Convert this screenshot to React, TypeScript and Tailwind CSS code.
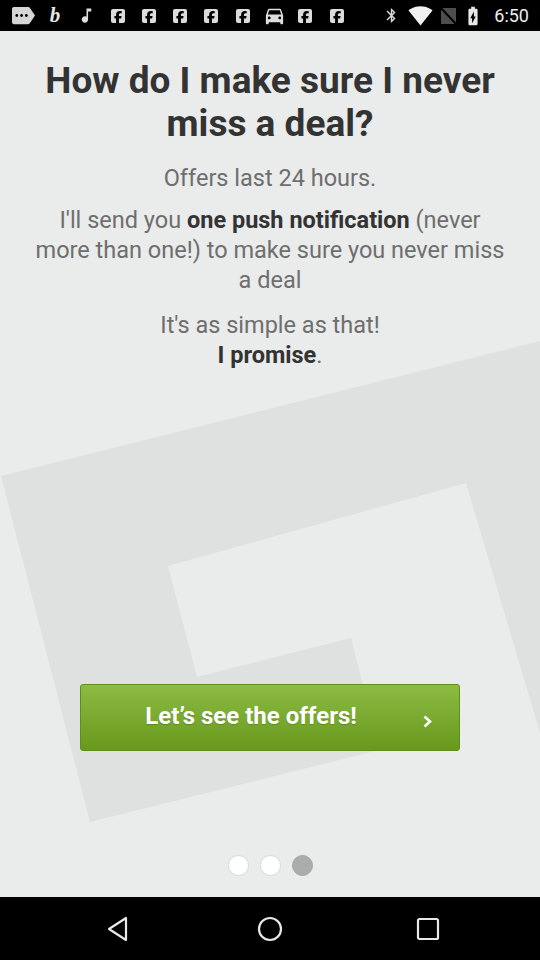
import React from "react";
import {
  MdMore,
  MdDirectionsCar,
  MdBluetooth,
  MdSignalWifi4Bar,
  MdBatteryChargingFull,
  MdMusicNote,
} from "react-icons/md";
import { FaSquareFacebook } from "react-icons/fa6";

const font = { fontFamily: "Roboto, 'Noto Sans', sans-serif" };

function Slot({ children }: { children: React.ReactNode }) {
  return <div className="w-[31.3px] flex justify-center items-center">{children}</div>;
}

function Fb() {
  return (
    <Slot>
      <FaSquareFacebook className="text-[#dcdcdc]" size={16} />
    </Slot>
  );
}

function StatusBar() {
  return (
    <div className="h-[31px] bg-black flex items-center pl-[8px] pr-[11px] text-[#e0e0e0]">
      <div className="flex items-center">
        <Slot>
          <MdMore size={23} className="text-[#d6d6d6] -scale-x-100" />
        </Slot>
        <Slot>
          <span className="text-[21px] italic font-bold leading-none text-[#e6e6e6]" style={{ fontFamily: "'Liberation Serif', serif" }}>
            b
          </span>
        </Slot>
        <Slot>
          <MdMusicNote size={19} className="text-[#dedede]" />
        </Slot>
        <Fb />
        <Fb />
        <Fb />
        <Fb />
        <Fb />
        <Slot>
          <MdDirectionsCar size={23} className="text-[#dedede]" />
        </Slot>
        <Fb />
        <Fb />
      </div>
      <div className="flex-1" />
      <div className="flex items-center">
        <MdBluetooth size={17} className="text-[#dcdcdc]" />
        <MdSignalWifi4Bar size={25} className="text-[#f0f0f0] ml-[8px]" />
        <svg width="15" height="16" viewBox="0 0 15 16" className="ml-[8px]">
          <rect x="0" y="0" width="15" height="16" fill="#4e4e4e" />
          <line x1="0" y1="0" x2="15" y2="16" stroke="#000" strokeWidth="2" />
        </svg>
        <MdBatteryChargingFull size={22} className="text-[#e8e8e8] ml-[6px]" />
        <span className="text-[18px] text-[#eeeeee] ml-[10px] leading-none" style={font}>
          6:50
        </span>
      </div>
    </div>
  );
}

function NavBar() {
  return (
    <div className="h-[63px] bg-black flex items-center">
      <div className="flex w-full items-center">
        <div className="w-[152px] flex justify-end pr-[22px]">
          <svg width="24" height="26" viewBox="0 0 24 26">
            <polygon points="20,2 20,24 3,13" fill="none" stroke="#e8e8e8" strokeWidth="2.2" strokeLinejoin="round" />
          </svg>
        </div>
        <div className="flex-1 flex justify-center">
          <svg width="26" height="26" viewBox="0 0 26 26">
            <circle cx="13" cy="13" r="11" fill="none" stroke="#e8e8e8" strokeWidth="2.2" />
          </svg>
        </div>
        <div className="w-[152px] flex justify-start pl-[28px]">
          <svg width="24" height="24" viewBox="0 0 24 24">
            <rect x="2" y="2" width="20" height="20" rx="1.5" fill="none" stroke="#e8e8e8" strokeWidth="2.2" />
          </svg>
        </div>
      </div>
    </div>
  );
}

function Background() {
  return (
    <svg
      className="absolute left-0 top-0 pointer-events-none"
      width="540"
      height="866"
      viewBox="0 31 540 866"
    >
      <polygon
        fill="#dfe0e0"
        points="1,476 700,301 800,1000 619,1000 466,483 168,566 197,677 351,638 379,750 90,822"
      />
    </svg>
  );
}

export default function App() {
  return (
    <div className="w-[540px] h-[960px] flex flex-col overflow-hidden" style={font}>
      <StatusBar />
      <div className="relative flex-1 bg-[#eaebeb] flex flex-col">
        <Background />
        <div className="relative flex flex-col items-center text-center px-[10px] pt-[28px]">
          <h1 className="text-[37px] leading-[43px] font-bold text-[#333333]">
            How do I make sure I never
            <br />
            miss a deal?
          </h1>
          <p className="mt-[18px] text-[23.5px] leading-[30px] text-[#6e6e6e]">Offers last 24 hours.</p>
          <p className="mt-[12px] text-[23.5px] leading-[30px] text-[#6e6e6e]">
            I'll send you <b className="font-bold text-[#333333]">one push notification</b> (never
            <br />
            more than one!) to make sure you never miss
            <br />a deal
          </p>
          <p className="mt-[15px] text-[23.5px] leading-[30px] text-[#6e6e6e]">
            It's as simple as that!
            <br />
            <b className="font-bold text-[#333333]">I promise</b>.
          </p>
        </div>
        <div className="flex-1" />
        <div className="relative flex justify-center">
          <button className="w-[380px] h-[67px] ml-[-1px] flex items-center rounded-[3px] border border-[#5f8e1b] bg-gradient-to-b from-[#8dbb43] to-[#67991a] text-white">
            <span className="flex-1 text-center text-[24px] font-bold pl-[2px] pb-[4px] [text-shadow:0_1px_1px_rgba(0,0,0,0.2)]">
              Let’s see the offers!
            </span>
            <span className="w-[39px] flex pl-[3px] pt-[7px]">
              <svg width="9" height="13" viewBox="0 0 9 13">
                <polyline points="1.5,1.5 7,6.5 1.5,11.5" fill="none" stroke="#fff" strokeWidth="2.6" />
              </svg>
            </span>
          </button>
        </div>
        <div className="relative flex justify-center gap-[11px] mt-[104px] mb-[21px] ml-[1px]">
          <div className="w-[21px] h-[21px] rounded-full bg-white border-[1.5px] border-[#d9d9d9]" />
          <div className="w-[21px] h-[21px] rounded-full bg-white border-[1.5px] border-[#d9d9d9]" />
          <div className="w-[21px] h-[21px] rounded-full bg-[#acacac] border-[1.5px] border-[#a4a4a4]" />
        </div>
      </div>
      <NavBar />
    </div>
  );
}
